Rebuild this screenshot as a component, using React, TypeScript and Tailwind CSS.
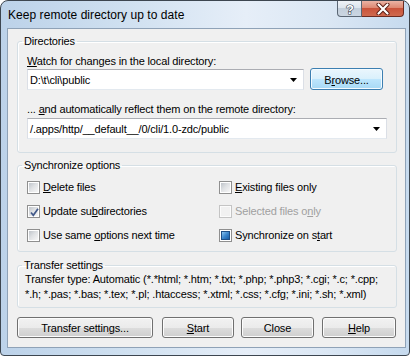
import React from "react";

type CheckState = "off" | "on" | "disabled" | "mixed";

function CheckBox({ state }: { state: CheckState }) {
  const disabled = state === "disabled";
  return (
    <span
      className={
        "relative flex h-[13px] w-[13px] shrink-0 items-center justify-center border " +
        (disabled ? "border-[#c4c4c4] bg-[#fbfbfb]" : "border-[#8f8f8f] bg-white")
      }
    >
      {state === "mixed" ? (
        <span className="h-[9px] w-[9px] border border-[#1f4f86] bg-[linear-gradient(135deg,#8cc4ef_0%,#3b86cc_50%,#1a5ca4_100%)]" />
      ) : (
        <span
          className={
            "h-[9px] w-[9px] " +
            (disabled
              ? "bg-[#f1f1f1]"
              : "bg-[linear-gradient(135deg,#bfc4ca_0%,#dfe1e4_45%,#f7f7f7_100%)]")
          }
        />
      )}
      {state === "on" && (
        <svg className="absolute left-[1px] top-[1px]" width="11" height="11" viewBox="0 0 11 11">
          <path d="M2 5.5 L4.3 8.3 L9 1.8" fill="none" stroke="#435a8a" strokeWidth="1.7" />
        </svg>
      )}
    </span>
  );
}

function CheckRow({ state, children, muted }: { state: CheckState; children: React.ReactNode; muted?: boolean }) {
  return (
    <div className="flex h-[14px] items-center gap-[3px]">
      <CheckBox state={state} />
      <span className={"whitespace-nowrap " + (muted ? "text-[#a0a0a0]" : "text-black")}>{children}</span>
    </div>
  );
}

function Combo({ value, width }: { value: string; width: string }) {
  return (
    <div
      className={
        "flex h-[21px] items-center justify-between border border-[#abadb3] border-x-[#dbdfe6] border-b-[#e3e9ef] bg-white pl-[2px] pr-[6px] " +
        width
      }
    >
      <span className="whitespace-nowrap">{value}</span>
      <svg width="7" height="4" viewBox="0 0 7 4">
        <path d="M0 0 H7 L3.5 4 Z" fill="#000" />
      </svg>
    </div>
  );
}

function Button({ children, width, def }: { children: React.ReactNode; width: string; def?: boolean }) {
  return (
    <button
      className={
        "flex items-center justify-center rounded-[3px] border pt-[1px] text-[11px] leading-[14px] tracking-[-0.15px] text-black " +
        (def
          ? "h-[22px] border-[#3c7fb1] bg-[linear-gradient(#eaf6fd_0%,#d9f0fc_50%,#bee6fd_50%,#a7d9f5_100%)] shadow-[inset_0_0_0_1px_#f4fbff] "
          : "h-[21px] border-[#707070] bg-[linear-gradient(#f2f2f2_0%,#ebebeb_50%,#dddddd_50%,#cfcfcf_100%)] shadow-[inset_0_0_0_1px_#fcfcfc] ") +
        width
      }
    >
      {children}
    </button>
  );
}

function Group({ title, children, className }: { title: string; children: React.ReactNode; className?: string }) {
  return (
    <fieldset
      className={
        "ml-[9px] w-[380px] rounded-[3px] border border-[#d5dfe5] shadow-[inset_1px_1px_0_#ffffff] " + (className ?? "")
      }
    >
      <legend className="ml-[4px] h-[13px] px-[2px] leading-[13px] whitespace-nowrap">{title}</legend>
      {children}
    </fieldset>
  );
}

export default function App() {
  return (
    <div className="min-h-screen bg-white font-['Liberation_Sans',Arial,sans-serif] text-[11px] leading-[14px] tracking-[-0.15px] text-black">
      <div className="flex h-[356px] w-[410px] flex-col rounded-t-[8px] rounded-b-[4px] border border-[#3d4650] bg-[linear-gradient(90deg,#bcd2e9_0%,#cfe0f0_30%,#e6eef8_60%,#dbe7f4_80%,#c6daee_100%)] pb-[7px] pl-[6px] pr-[3px]">
        {/* Title bar */}
        <div className="flex h-[27px] items-start justify-between">
          <span className="ml-[1px] mt-[7px] whitespace-nowrap text-[12px] leading-[15px] tracking-[0.05px] text-black">
            Keep remote directory up to date
          </span>
          <div className="mr-[2px] flex">
            <div className="flex h-[16px] w-[25px] items-center justify-center rounded-bl-[4px] border border-t-0 border-[#5a6674] bg-[linear-gradient(#eef2f7_0%,#dde5ee_45%,#c3cfdc_50%,#cbd6e2_100%)]">
              <svg width="12" height="13" viewBox="0 0 12 13">
                <text
                  x="6"
                  y="11.5"
                  textAnchor="middle"
                  fontFamily="Liberation Sans, Arial, sans-serif"
                  fontWeight="bold"
                  fontSize="13"
                  fill="#ffffff"
                  stroke="#3b4654"
                  strokeWidth="1.2"
                  paintOrder="stroke"
                >
                  ?
                </text>
              </svg>
            </div>
            <div className="flex h-[16px] w-[42px] items-center justify-center rounded-br-[4px] border border-l-0 border-t-0 border-[#6b2a20] bg-[linear-gradient(#eab3a5_0%,#dd8872_45%,#c9533b_50%,#cf6a4f_100%)]">
              <svg width="14" height="12" viewBox="0 0 14 12">
                <path d="M2.5 1.5 L11.5 10.5 M11.5 1.5 L2.5 10.5" stroke="#5a1c12" strokeWidth="4" strokeLinecap="round" />
                <path d="M2.5 1.5 L11.5 10.5 M11.5 1.5 L2.5 10.5" stroke="#ffffff" strokeWidth="2.2" strokeLinecap="round" />
              </svg>
            </div>
          </div>
        </div>

        {/* Client area */}
        <div className="flex flex-1 flex-col border border-[#8fa2b7] bg-[#f0f0f0]">
          <Group title="Directories" className="mt-[6px]">
            <div className="flex flex-col pb-[13px] pl-[9px] pt-[6px]">
              <span className="h-[14px] whitespace-nowrap">
                <u>W</u>atch for changes in the local directory:
              </span>
              <div className="flex h-[22px] items-start gap-[6px]">
                <div className="mt-[1px]">
                  <Combo value="D:\t\cli\public" width="w-[277px]" />
                </div>
                <Button width="w-[73px]" def>
                  <span>
                    B<u>r</u>owse...
                  </span>
                </Button>
              </div>
              <span className="mt-[12px] h-[14px] whitespace-nowrap">
                ... <u>a</u>nd automatically reflect them on the remote directory:
              </span>
              <div className="mt-[2px]">
                <Combo value="/.apps/http/__default__/0/cli/1.0-zdc/public" width="w-[360px]" />
              </div>
            </div>
          </Group>

          <Group title="Synchronize options" className="mt-[6px]">
            <div className="flex flex-col gap-[10px] pb-[9px] pl-[9px] pt-[8px]">
              <div className="flex">
                <div className="w-[192px]">
                  <CheckRow state="off">
                    <u>D</u>elete files
                  </CheckRow>
                </div>
                <CheckRow state="off">
                  <u>E</u>xisting files only
                </CheckRow>
              </div>
              <div className="flex">
                <div className="w-[192px]">
                  <CheckRow state="on">
                    Update su<u>b</u>directories
                  </CheckRow>
                </div>
                <CheckRow state="disabled" muted>
                  Selected files o<u>n</u>ly
                </CheckRow>
              </div>
              <div className="flex">
                <div className="w-[192px]">
                  <CheckRow state="off">
                    Use same <u>o</u>ptions next time
                  </CheckRow>
                </div>
                <CheckRow state="mixed">
                  Synchronize on s<u>t</u>art
                </CheckRow>
              </div>
            </div>
          </Group>

          <Group title="Transfer settings" className="mt-[7px]">
            <div className="flex flex-col pb-[5px] pl-[7px] leading-[15px]">
              <span className="whitespace-nowrap">
                Transfer type: Automatic (*.*html; *.htm; *.txt; *.php; *.php3; *.cgi; *.c; *.cpp;
              </span>
              <span className="whitespace-nowrap">
                *.h; *.pas; *.bas; *.tex; *.pl; .htaccess; *.xtml; *.css; *.cfg; *.ini; *.sh; *.xml)
              </span>
            </div>
          </Group>

          <div className="ml-[9px] mt-[9px] flex">
            <Button width="w-[136px]">
              <span>
                Transfer settin<u>g</u>s...
              </span>
            </Button>
            <div className="ml-[9px]">
              <Button width="w-[72px]">
                <span>
                  <u>S</u>tart
                </span>
              </Button>
            </div>
            <div className="ml-[7px]">
              <Button width="w-[73px]">Close</Button>
            </div>
            <div className="ml-[8px]">
              <Button width="w-[74px]">
                <span>
                  <u>H</u>elp
                </span>
              </Button>
            </div>
          </div>
        </div>
      </div>
    </div>
  );
}
